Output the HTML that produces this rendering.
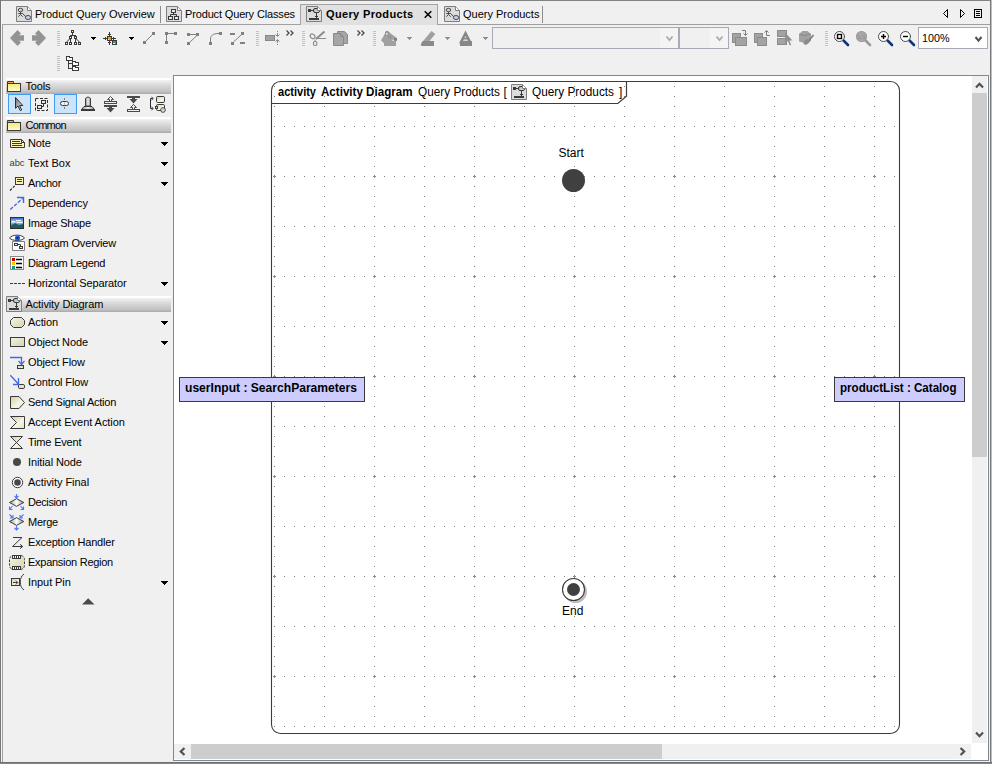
<!DOCTYPE html>
<html lang="en">
<head>
<meta charset="utf-8">
<title>Query Products - Activity Diagram</title>
<style>
html,body{margin:0;padding:0;}
body{width:992px;height:764px;overflow:hidden;background:#f0f0f0;position:relative;
  font-family:"Liberation Sans",sans-serif;font-size:11px;color:#000;}
.abs{position:absolute;}
#win{position:absolute;left:0;top:0;width:992px;height:764px;overflow:hidden;}
/* window edges */
#edgeT{left:0;top:0;width:992px;height:1px;background:#828282;}
#edgeL{left:0;top:0;width:1px;height:764px;background:#767676;}
#edgeL2{left:1px;top:1px;width:1px;height:762px;background:#f6f6f6;}
#edgeR{left:990px;top:0;width:1px;height:764px;background:#7a7a7a;}
#edgeR2{left:991px;top:0;width:1px;height:764px;background:#bdbdbd;}
#edgeB{left:0;top:762px;width:992px;height:1px;background:#707070;}
#edgeB2{left:0;top:763px;width:992px;height:1px;background:#858585;}
/* tabbed pane content border */
#pane{left:2px;top:24px;width:1000px;height:760px;border:1px solid #a0a0a0;box-sizing:border-box;}
/* tabs */
.tab{position:absolute;top:5px;height:19px;line-height:18px;white-space:nowrap;font-size:11px;}
.tabsep{position:absolute;top:6px;width:1px;height:17px;background:#8c8c8c;}
#tabsel{left:300px;top:4px;width:138px;height:21px;background:#e1e1e1;border:1px solid #a3a3a3;border-bottom:none;box-sizing:border-box;}
/* palette */
.phead{position:absolute;left:6px;width:165px;height:16px;background:linear-gradient(#ffffff 0%,#ffffff 12%,#f1f1f1 14%,#dddddd 40%,#cdcdcd 65%,#c2c2c2 85%,#a9a9a9 100%);}
.phead span{position:absolute;left:19.5px;top:0;line-height:17px;font-size:11px;}
.pitem{position:absolute;left:28px;height:20px;line-height:20px;font-size:11px;white-space:nowrap;}
.parr{position:absolute;left:160px;width:0;height:0;border-left:4px solid transparent;border-right:4px solid transparent;border-top:4px solid #000;}
.ico{position:absolute;overflow:visible;}
/* canvas */
#canvas{left:173px;top:75px;width:816px;height:686px;background:#fff;border:1px solid #7f8795;box-sizing:border-box;overflow:hidden;}
.dtext{position:absolute;font-size:12px;white-space:nowrap;color:#000;}
.pin{position:absolute;background:#ccccff;border:1px solid #3f3f3f;box-sizing:border-box;font-weight:bold;font-size:12px;line-height:22px;white-space:nowrap;}
</style>
</head>
<body>
<div id="win">

<!-- ===== tab strip ===== -->
<div id="pane" class="abs"></div>
<div id="tabsel" class="abs"></div>
<div class="tab" style="left:35px;">Product Query Overview</div>
<div class="tabsep" style="left:160px;"></div>
<div class="tab" style="left:185px;letter-spacing:-0.15px;">Product Query Classes</div>
<div class="tab" style="left:326px;font-weight:bold;letter-spacing:0.35px;">Query Products</div>
<div class="tab" style="left:463px;">Query Products</div>
<div class="tabsep" style="left:542px;"></div>

<!-- ===== toolbars ===== -->
<!--TB--><svg class="abs" style="left:0;top:0;pointer-events:none;" width="992" height="76" viewBox="0 0 992 76">
<defs>
  <g id="grip" shape-rendering="crispEdges" fill="#c2c2c2"><rect x="0" y="0" width="3" height="1"/><rect x="0" y="2" width="3" height="1"/><rect x="0" y="4" width="3" height="1"/><rect x="0" y="6" width="3" height="1"/><rect x="0" y="8" width="3" height="1"/><rect x="0" y="10" width="3" height="1"/><rect x="0" y="12" width="3" height="1"/><rect x="0" y="14" width="3" height="1"/></g>
  <g id="dd5" shape-rendering="crispEdges"><rect x="0" y="0" width="5" height="1"/><rect x="1" y="1" width="3" height="1"/><rect x="2" y="2" width="1" height="1"/></g>
  <g id="dd7" shape-rendering="crispEdges"><rect x="0" y="0" width="7" height="1"/><rect x="1" y="1" width="5" height="1"/><rect x="2" y="2" width="3" height="1"/><rect x="3" y="3" width="1" height="1"/></g>
  <linearGradient id="gblue" x1="0" y1="0" x2="1" y2="1"><stop offset="0" stop-color="#8ea4cc"/><stop offset="1" stop-color="#eef3fb"/></linearGradient>
  <!-- document page 16x16 -->
  <g id="fold"><path d="M11.500 0.500V4.500H15.500Z" fill="#fff"/><path d="M11.500 0.500V4.500H15.500" fill="none" stroke="#7e7e7e"/><path d="M11.800 0.800L15.200 4.200" fill="none" stroke="#9a9a9a" stroke-width="0.700"/></g>
  <g id="page"><path d="M0.500 0.500H11.500L15.500 4.500V15.500H0.500Z" fill="#dcdcdc" stroke="#7e7e7e"/><use href="#fold"/></g>
  <!-- use case diagram icon -->
  <g id="icoUC"><use href="#page"/>
    <ellipse cx="4.500" cy="4" rx="2.300" ry="1.700" fill="#c5d3ec" stroke="#3c3c3c" stroke-width="0.900"/>
    <path d="M4.500 6V8.500M2.300 7.500H6.700M4.500 8.500L2.300 10.700M4.500 8.500L6.700 10.700M6.500 7.500L10 10.800" fill="none" stroke="#3c3c3c" stroke-width="0.900"/>
    <ellipse cx="12" cy="11.500" rx="2.700" ry="2" fill="#c5d3ec" stroke="#3c3c3c" stroke-width="0.900"/></g>
  <!-- class diagram icon -->
  <g id="icoCL"><use href="#page"/>
    <g fill="#dfe8f8" stroke="#3a3a3a"><rect x="5.500" y="3.500" width="4" height="3"/><rect x="2.500" y="10.500" width="4" height="3"/><rect x="8.500" y="10.500" width="4" height="3"/></g>
    <path d="M7.500 7V8.500M4.500 10V8.500H10.500V10" fill="none" stroke="#3a3a3a"/></g>
  <!-- activity diagram icon -->
  <g id="icoAC"><use href="#page"/>
    <rect x="2" y="3" width="3" height="3" fill="#3a3a3a"/>
    <path d="M5 4.500H7.500" stroke="#3a3a3a" fill="none"/>
    <rect x="7.500" y="2.500" width="6" height="4" rx="1.500" fill="url(#gblue)" stroke="#3a3a3a"/>
    <path d="M10.500 7V12M9 10.500H12" stroke="#3a3a3a" fill="none"/>
    <rect x="3" y="12" width="10" height="2" fill="#3a3a3a"/>
    <use href="#fold"/></g>
</defs>

<!-- tab icons -->
<use href="#icoUC" x="16" y="6"/>
<use href="#icoCL" x="166" y="6"/>
<use href="#icoAC" x="306" y="6"/>
<use href="#icoUC" x="444" y="6"/>
<!-- tab close X -->
<path d="M424.700 11.300L431.300 17.700M431.300 11.300L424.700 17.700" stroke="#000" stroke-width="1.500" fill="none"/>
<!-- tab scroll buttons -->
<path d="M947.500 9.500V17.500L943.500 13.500Z" fill="none" stroke="#000" stroke-width="1"/>
<path d="M960.500 9.500V17.500L964.500 13.500Z" fill="none" stroke="#000" stroke-width="1"/>
<g shape-rendering="crispEdges"><rect x="974.500" y="9.500" width="7" height="8" fill="none" stroke="#000"/><rect x="976" y="11" width="4" height="1"/><rect x="976" y="13" width="4" height="1"/><rect x="976" y="15" width="4" height="1"/></g>

<!-- grips -->
<use href="#grip" x="57" y="31"/><use href="#grip" x="256" y="31"/><use href="#grip" x="302" y="31"/><use href="#grip" x="373" y="31"/><use href="#grip" x="825" y="31"/><use href="#grip" x="57" y="56"/>

<!-- back / forward -->
<path d="M10 38L17.500 30L21 33.400L19 35.200H24V40.800H19L21 42.600L17.500 46Z" fill="#939393"/>
<path d="M46 38L38.500 30L35 33.400L37 35.200H32V40.800H37L35 42.600L38.500 46Z" fill="#939393"/>

<!-- tree layout icon -->
<g shape-rendering="crispEdges" fill="none" stroke="#3a3a3a">
  <rect x="71.500" y="30.500" width="2" height="2"/><rect x="69.500" y="36.500" width="2" height="2"/><rect x="74.500" y="36.500" width="2" height="2"/>
  <rect x="65.500" y="42.500" width="2" height="2"/><rect x="69.500" y="42.500" width="2" height="2"/><rect x="74.500" y="42.500" width="2" height="2"/><rect x="78.500" y="42.500" width="2" height="2"/>
  <path d="M72.500 33V35.500M70.500 36V35.500H75.500V36M70.500 39V42M75.500 39V42"/>
</g>
<path d="M69.500 39L66.500 42.200M76.500 39L79.500 42.200" stroke="#3a3a3a" fill="none"/>
<use href="#dd5" x="91" y="37" fill="#000"/>

<!-- layout selected icon -->
<g shape-rendering="crispEdges">
  <path d="M109.500 32V36M108 34.500H111M103 38.500H107M105.500 37V40M112 38.500H116M113.500 37V40M109.500 41V45M108 42.500H111" stroke="#3a3a3a" fill="none"/>
  <rect x="107.500" y="36.500" width="4" height="4" fill="#e8962e" stroke="#3a3a3a"/>
  <rect x="108" y="39" width="1" height="1" fill="#fde9c4"/>
  <rect x="112.500" y="40.500" width="4" height="4" fill="#35a352" stroke="#3a3a3a"/>
  <rect x="113" y="43" width="2" height="1" fill="#eaf7ee"/>
</g>
<use href="#dd5" x="129" y="37" fill="#000"/>

<!-- path style icons -->
<g fill="#808080" stroke="#808080">
  <g stroke="none"><rect x="143" y="41" width="3" height="3"/><rect x="152" y="32" width="3" height="3"/>
  <rect x="165" y="32" width="3" height="3"/><rect x="174" y="32" width="3" height="3"/><rect x="165" y="41" width="3" height="3"/>
  <rect x="187" y="33" width="3" height="3"/><rect x="196" y="33" width="3" height="3"/><rect x="187" y="42" width="3" height="3"/>
  <rect x="219" y="32" width="3" height="3"/><rect x="209" y="42" width="3" height="3"/>
  <rect x="241" y="32" width="3" height="3"/><rect x="231" y="42" width="3" height="3"/>
  <rect x="230" y="33" width="5" height="2"/><rect x="240" y="42" width="5" height="2"/></g>
  <path d="M145.500 41.500L152.500 34.500M168 33.500H174M166.500 35V41M190 34.500H196M197 35.500L189.500 42.500M210.500 42V39C210.500 35.500 213 33.500 219 33.500M233.500 42L241.500 34.500" fill="none" stroke-width="1"/>
</g>

<!-- make same size icon -->
<rect x="265.500" y="35.500" width="9" height="5" fill="#a2a2a2" stroke="#868686"/>
<g stroke="#868686" fill="none"><path d="M277.500 33V36M275.500 34.500L277.500 36.500L279.500 34.500M277.500 43V40M275.500 41.500L277.500 39.500L279.500 41.500"/></g>
<rect x="277" y="31" width="1" height="1" fill="#868686"/><rect x="277" y="44" width="1" height="1" fill="#868686"/>
<path d="M286.500 30.500L289 33L286.500 35.500M290.500 30.500L293 33L290.500 35.500" fill="none" stroke="#484848" stroke-width="1.300"/>

<!-- cut -->
<g fill="none" stroke="#8c8c8c">
  <ellipse cx="312.600" cy="36.300" rx="2.600" ry="2" transform="rotate(35 312.600 36.300)" stroke-width="1.200"/>
  <rect x="313.500" y="41.500" width="3.300" height="4" rx="1.200" stroke-width="1.200"/>
  <path d="M316 39L324.500 31.500" stroke-width="2"/>
  <path d="M315 41.500V39.500M316.500 38.500H326" stroke-width="1"/>
</g>
<!-- copy -->
<path d="M337.500 31.500H344.500L347.500 34.500V43.500H337.500Z" fill="#a6a6a6" stroke="#8a8a8a"/>
<path d="M333.500 33.500H340.500L343.500 36.500V45.500H333.500Z" fill="#a6a6a6" stroke="#8a8a8a"/>
<path d="M340.500 33.500V36.500H343.500" fill="none" stroke="#8a8a8a"/>
<path d="M357.500 30.500L360 33L357.500 35.500M361.500 30.500L364 33L361.500 35.500" fill="none" stroke="#484848" stroke-width="1.300"/>

<!-- fill color (bucket) -->
<path d="M381 40.200L386.300 31.600L388 31.300L397 38.300V41H396V46H384V43.200Z" fill="#a0a0a0"/>
<path d="M385.500 36V33.200C385.500 30.800 388.700 30.800 388.700 33.400" fill="none" stroke="#8c8c8c" stroke-width="1.100"/><circle cx="386.700" cy="33.800" r="0.900" fill="#f0f0f0"/><path d="M388 35.500L391 38.500" stroke="#8e8e8e" stroke-width="1.400" fill="none"/><rect x="392.500" y="39.700" width="1.300" height="1.300" fill="#efefef"/>
<rect x="394" y="38" width="3" height="2.500" fill="#808080"/>
<use href="#dd5" x="407" y="37" fill="#8e8e8e"/>
<!-- line color (pen) -->
<path d="M423.200 41L431.500 31L435.300 34L429.500 41Z" fill="#a0a0a0"/>
<path d="M422.500 41H434V46H421.500L420.800 44.500Z" fill="#8a8a8a"/>
<use href="#dd5" x="445" y="37" fill="#8e8e8e"/>
<!-- text color (A) -->
<path d="M465.500 33.200L461 42H470Z" fill="none" stroke="#868686" stroke-width="2.500" stroke-linejoin="miter"/>
<path d="M462.500 38.600H468.500" stroke="#868686" stroke-width="1.800"/>
<rect x="460" y="41" width="12" height="5" fill="#868686"/>
<use href="#dd5" x="483" y="37" fill="#8e8e8e"/>

<!-- combos -->
<g shape-rendering="crispEdges" fill="none" stroke="#a8abb6">
  <rect x="492.500" y="27.500" width="186" height="21" fill="#f0f0f0"/>
  <rect x="679.500" y="27.500" width="49" height="21" fill="#f0f0f0"/>
  <rect x="918.500" y="27.500" width="69" height="21" fill="#fff"/>
</g>
<rect x="660" y="28" width="18" height="20" fill="#f4f4f4"/><rect x="710" y="28" width="18" height="20" fill="#f4f4f4"/>
<path d="M666.500 36.500L669.500 40L672.500 36.500" fill="none" stroke="#aaaaaa" stroke-width="1.800"/>
<path d="M716.500 36.500L719.500 40L722.500 36.500" fill="none" stroke="#aaaaaa" stroke-width="1.800"/>
<path d="M975.500 37L978.500 40.700L981.500 37" fill="none" stroke="#505050" stroke-width="2"/>

<!-- order icons -->
<g fill="#a3a3a3" stroke="#8b8b8b">
  <rect x="732.500" y="33.500" width="8" height="9"/><rect x="735.500" y="37.500" width="11" height="8"/>
  <rect x="754.500" y="33.500" width="8" height="9"/><rect x="757.500" y="37.500" width="9" height="8"/>
  <rect x="777.500" y="30.500" width="9" height="6"/><rect x="777.500" y="38.500" width="9" height="6"/>
</g>
<path d="M742 30.500H745.500V35M743.500 33.500L745.500 35.500L747.500 33.500" fill="none" stroke="#7e7e7e"/>
<path d="M770 35.500H766.500V31M764.500 32.500L766.500 30.500L768.500 32.500" fill="none" stroke="#7e7e7e"/>
<path d="M785 32.500V43.500L787.800 41L789.800 45.500L791.200 44.800L789.300 40.500H792.500Z" fill="#909090"/>
<!-- style brush icon -->
<path d="M799 34L802.500 31H807.500L811 34V41L806 43.500L799 41.500Z" fill="#a0a0a0"/>
<path d="M799.500 34.200L805 35.500L810.500 34" fill="none" stroke="#8a8a8a"/>
<path d="M813.500 35L808.500 41" stroke="#7e7e7e" stroke-width="1.800"/>
<ellipse cx="806.500" cy="42" rx="3.300" ry="2.300" transform="rotate(-40 806.500 42)" fill="#8c8c8c"/>

<!-- zoom icons -->
<g stroke-linecap="round">
  <path d="M843.500 40.500L848 45" stroke="#0f347f" stroke-width="2.600"/>
  <circle cx="839.500" cy="36.500" r="5" fill="#fff" stroke="#4a4a4a" stroke-width="1"/>
  <rect x="837.500" y="34.500" width="4" height="4" fill="#fff" stroke="#000" stroke-width="1.400"/>
  <path d="M865.500 40.500L870 45" stroke="#9a9a9a" stroke-width="2.600"/>
  <circle cx="861.500" cy="36.500" r="5" fill="#a8a8a8" stroke="#999999" stroke-width="1.100"/>
  <text x="857.800" y="38.800" font-family="Liberation Sans, sans-serif" font-size="6" font-weight="bold" fill="#949494" textLength="7.500" lengthAdjust="spacingAndGlyphs">1:1</text>
  <path d="M887.500 40.500L892 45" stroke="#0f347f" stroke-width="2.600"/>
  <circle cx="883.500" cy="36.500" r="5" fill="#fff" stroke="#4a4a4a" stroke-width="1"/>
  <path d="M881 36.500H886M883.500 34V39" stroke="#000" stroke-width="1.400" stroke-linecap="butt"/>
  <path d="M909.500 40.500L914 45" stroke="#0f347f" stroke-width="2.600"/>
  <circle cx="905.500" cy="36.500" r="5" fill="#fff" stroke="#4a4a4a" stroke-width="1"/>
  <path d="M903 36.500H908" stroke="#000" stroke-width="1.400" stroke-linecap="butt"/>
</g>
<text x="922" y="42" font-family="Liberation Sans, sans-serif" font-size="11" fill="#000" textLength="27.500" lengthAdjust="spacingAndGlyphs">100%</text>

<!-- containment tree icon (row 2) -->
<g fill="#fff" stroke="#3a3a3a" shape-rendering="crispEdges">
  <path d="M68.500 61V68.500H72M68.500 63.500H72" fill="none"/>
  <path d="M66.500 56.500H69.500V57.500H72.500V60.500H66.500Z"/>
  <path d="M72.500 61.500H75.500V62.500H78.500V65.500H72.500Z"/>
  <path d="M72.500 66.500H75.500V67.500H78.500V70.500H72.500Z"/>
</g>
</svg>
<!--/TB-->

<!-- ===== palette ===== -->
<div id="palette">
<div class="phead" style="top:78px;"><span style="letter-spacing:-0.16px">Tools</span></div>
<div class="phead" style="top:117px;"><span style="letter-spacing:-0.7px">Common</span></div>
<div class="phead" style="top:296px;"><span style="letter-spacing:-0.11px">Activity Diagram</span></div>

<div class="pitem" style="top:133px;letter-spacing:-0.16px">Note</div>
<div class="pitem" style="top:153px;letter-spacing:0.05px">Text Box</div>
<div class="pitem" style="top:173px;letter-spacing:-0.31px">Anchor</div>
<div class="pitem" style="top:193px;letter-spacing:-0.21px">Dependency</div>
<div class="pitem" style="top:213px;letter-spacing:-0.24px">Image Shape</div>
<div class="pitem" style="top:233px;letter-spacing:-0.15px">Diagram Overview</div>
<div class="pitem" style="top:253px;letter-spacing:-0.3px">Diagram Legend</div>
<div class="pitem" style="top:273px;letter-spacing:-0.12px">Horizontal Separator</div>

<div class="pitem" style="top:312px;letter-spacing:-0.1px">Action</div>
<div class="pitem" style="top:332px;letter-spacing:-0.11px">Object Node</div>
<div class="pitem" style="top:352px;letter-spacing:-0.11px">Object Flow</div>
<div class="pitem" style="top:372px;letter-spacing:-0.15px">Control Flow</div>
<div class="pitem" style="top:392px;letter-spacing:-0.24px">Send Signal Action</div>
<div class="pitem" style="top:412px;letter-spacing:-0.05px">Accept Event Action</div>
<div class="pitem" style="top:432px;letter-spacing:-0.19px">Time Event</div>
<div class="pitem" style="top:452px;letter-spacing:-0.1px">Initial Node</div>
<div class="pitem" style="top:472px;letter-spacing:-0.05px">Activity Final</div>
<div class="pitem" style="top:492px;letter-spacing:-0.4px">Decision</div>
<div class="pitem" style="top:512px;letter-spacing:-0.24px">Merge</div>
<div class="pitem" style="top:532px;letter-spacing:-0.19px">Exception Handler</div>
<div class="pitem" style="top:552px;letter-spacing:-0.27px">Expansion Region</div>
<div class="pitem" style="top:572px;letter-spacing:-0.07px">Input Pin</div>
<!--PAL--><svg class="abs" style="left:0;top:76px;pointer-events:none;" width="173" height="540" viewBox="0 76 173 540">
<defs>
  <linearGradient id="gfold" x1="0" y1="0" x2="0" y2="1"><stop offset="0" stop-color="#f2ea6a"/><stop offset="1" stop-color="#fffce0"/></linearGradient>
  <linearGradient id="gcream" x1="0" y1="0" x2="1" y2="1"><stop offset="0" stop-color="#f4f4e2"/><stop offset="1" stop-color="#d4d4b2"/></linearGradient>
  <linearGradient id="gcream2" x1="0" y1="0" x2="1" y2="1"><stop offset="0" stop-color="#d2cf9c"/><stop offset="0.6" stop-color="#f6f6e6"/><stop offset="1" stop-color="#e0e0c4"/></linearGradient>
  <linearGradient id="gdia" x1="0" y1="0" x2="1" y2="0"><stop offset="0" stop-color="#9a9a9a"/><stop offset="0.5" stop-color="#ffffff"/><stop offset="1" stop-color="#9a9a9a"/></linearGradient>
  <linearGradient id="gcur" x1="0" y1="0" x2="1" y2="1"><stop offset="0" stop-color="#6a6a6a"/><stop offset="1" stop-color="#f4f4f4"/></linearGradient>
  <linearGradient id="gstamp" x1="0" y1="0" x2="1" y2="0"><stop offset="0" stop-color="#8a8a8a"/><stop offset="0.5" stop-color="#f0f0f0"/><stop offset="1" stop-color="#8a8a8a"/></linearGradient>
  <linearGradient id="gsky" x1="0" y1="0" x2="0" y2="1"><stop offset="0" stop-color="#2b63c8"/><stop offset="0.45" stop-color="#b8d6f0"/><stop offset="0.6" stop-color="#5aa0a0"/><stop offset="1" stop-color="#1d5a62"/></linearGradient>
  <g id="folder"><path d="M0.500 2.500V0.500H6.500V2.500" fill="#f3c277" stroke="#3a3a3a"/><rect x="1" y="1" width="5" height="1" fill="#f0a850"/><rect x="0.500" y="2.500" width="13" height="8" fill="url(#gfold)" stroke="#3a3a3a"/></g>
  <g id="pdd" shape-rendering="crispEdges" fill="#000"><rect x="0" y="0" width="7" height="1"/><rect x="1" y="1" width="5" height="1"/><rect x="2" y="2" width="3" height="1"/><rect x="3" y="3" width="1" height="1"/></g>
</defs>

<!-- folders in headers -->
<use href="#folder" x="7" y="81"/>
<use href="#folder" x="7" y="120"/>
<use href="#icoAC" x="6" y="296"/>

<!-- dropdown arrows -->
<use href="#pdd" x="161" y="142"/><use href="#pdd" x="161" y="162"/><use href="#pdd" x="161" y="182"/><use href="#pdd" x="161" y="282"/>
<use href="#pdd" x="161" y="321"/><use href="#pdd" x="161" y="341"/><use href="#pdd" x="161" y="581"/>

<!-- tool buttons -->
<g shape-rendering="crispEdges"><rect x="8.500" y="94.500" width="22" height="19" fill="#cce4fb" stroke="#3d9bf5"/><rect x="54.500" y="94.500" width="22" height="19" fill="#cce4fb" stroke="#3d9bf5"/></g>
<!-- select arrow -->
<path d="M15.500 97.500V108.300L18 106L20.300 110.700L21.700 110L19.500 105.500H22.800Z" fill="url(#gcur)" stroke="#2e2e2e" stroke-width="1" stroke-linejoin="round"/>
<!-- marquee -->
<rect x="35.500" y="98.500" width="12" height="12" fill="none" stroke="#2e2e2e" stroke-width="1" stroke-dasharray="3 1.500"/>
<rect x="41.500" y="100.500" width="4" height="3" fill="#e8e8e8" stroke="#2e2e2e"/><rect x="37.500" y="105.500" width="4" height="3" fill="#e8e8e8" stroke="#2e2e2e"/>
<path d="M43.500 104V106.500H42" fill="none" stroke="#2e2e2e"/>
<!-- sticky -->
<rect x="60.500" y="101.500" width="8" height="4" rx="2" fill="#f2f2f2" stroke="#3a3a3a"/>
<path d="M64.500 98V100M64.500 107V109" stroke="#8a7a6a" fill="none"/>
<path d="M64.500 102.500V104.500" stroke="#b0b0b0" fill="none"/>
<!-- stamp -->
<path d="M85.500 99C85.500 96.500 90.500 96.500 90.500 99V106H85.500Z" fill="url(#gstamp)" stroke="#3a3a3a"/>
<path d="M81.500 109.500L84 106.500H92L94.500 109.500Z" fill="url(#gstamp)" stroke="#3a3a3a" stroke-linejoin="round"/>
<rect x="81" y="109" width="14" height="2" fill="#3a3a3a"/>
<!-- split icons -->
<g stroke="#4a4a4a" fill="none">
  <path d="M110.500 96.500L107.500 99.500H109.500V101.500H111.500V99.500H113.500Z" fill="#f0f0f0"/>
  <rect x="104.500" y="101.500" width="12" height="2" fill="#f0f0f0"/>
</g>
<rect x="104" y="105" width="13" height="2" fill="#4a4a4a"/><path d="M106.500 108H114.500L110.500 112.500Z" fill="#4a4a4a"/><rect x="109" y="106" width="3" height="3" fill="#4a4a4a"/>
<rect x="127" y="96" width="13" height="2" fill="#4a4a4a"/><path d="M129.500 99H137.500L133.500 103.500Z" fill="#4a4a4a"/><rect x="132" y="97" width="3" height="3" fill="#4a4a4a"/>
<g stroke="#4a4a4a" fill="#f0f0f0"><path d="M133.500 104.500L130.500 107.500H132.500V109.500H134.500V107.500H136.500Z"/><rect x="127.500" y="109.500" width="12" height="2"/></g>
<!-- last tool: transform -->
<path d="M152.500 98.500H150.500V108.500H152.500M151.500 97L153.300 98.500L151.500 100M151.500 107L153.300 108.500L151.500 110" fill="none" stroke="#2e2e2e"/>
<rect x="156.500" y="96.500" width="8" height="6" rx="1.200" fill="url(#gcream2)" stroke="#3a3a3a"/>
<rect x="156.500" y="104.500" width="8" height="6" rx="1.200" fill="url(#gcream2)" stroke="#3a3a3a"/>
<rect x="155.500" y="106.500" width="2" height="2" fill="#d8d4a0" stroke="#3a3a3a"/>
<circle cx="163" cy="110" r="2.300" fill="#fff" stroke="#3a3a3a"/><rect x="162.500" y="109.500" width="1" height="1" fill="#3a3a3a"/>

<!-- Note -->
<path d="M10.500 139.500H21.500L24.500 142.500V147.500H10.500Z" fill="#fbf3b4" stroke="#3a3a3a"/>
<path d="M21.500 139.500V142.500H24.500M12 141.500H20M12 143.500H22M12 145.500H22" fill="none" stroke="#3a3a3a"/>
<!-- abc -->
<text x="9.500" y="166" font-family="Liberation Sans, sans-serif" font-size="9.500" fill="#3a3a3a" textLength="15" lengthAdjust="spacingAndGlyphs">abc</text>
<!-- Anchor -->
<rect x="15.500" y="177.500" width="8" height="7" fill="#fbf3b4" stroke="#3a3a3a"/>
<path d="M17 179.500H22M17 181.500H22" stroke="#3a3a3a" fill="none"/>
<path d="M14.700 185.800L9.800 190.700" stroke="#2a2a2a" stroke-width="1.200" stroke-dasharray="2.600 1.400" fill="none"/>
<!-- Dependency -->
<path d="M10.300 209.500L22.500 198.500" stroke="#4169e1" stroke-width="1.400" stroke-dasharray="3.600 1.500" fill="none"/>
<path d="M17 197.500H23.500V203" stroke="#4169e1" stroke-width="1.400" fill="none"/>
<!-- Image shape -->
<rect x="10.500" y="217.500" width="13" height="11" fill="url(#gsky)" stroke="#2e2e2e"/>
<path d="M12 221.500H15M16 220.500H21M17 222.500H22" stroke="#f4f8fc" fill="none"/>
<path d="M11 226L15 223L19 225.500L23 224V228H11Z" fill="#1d5a62"/>
<!-- Diagram overview -->
<path d="M12.500 241.500H24.500V250.500H12.500Z" fill="#fff" stroke="#808080"/>
<rect x="14.500" y="243.500" width="3" height="2" fill="#e8e8f4" stroke="#3a3a3a"/><rect x="19.500" y="246.500" width="3" height="2" fill="#e8e8f4" stroke="#3a3a3a"/>
<path d="M18 244.500H20.500V246" fill="none" stroke="#3a3a3a"/>
<path d="M9.500 238C12.500 234.200 21.500 234.200 24.500 238C21.500 241.300 12.500 241.300 9.500 238Z" fill="#fff" stroke="#3a3a3a"/>
<circle cx="17.500" cy="238" r="2.600" fill="#1a5fe0"/><circle cx="17.500" cy="238" r="1" fill="#10204a"/>
<!-- Diagram legend -->
<rect x="10.500" y="256.500" width="13" height="13" fill="#fff" stroke="#8a8a8a"/>
<rect x="12" y="258" width="3" height="3" fill="#c00000"/><rect x="12" y="262" width="3" height="3" fill="#ffc000"/><rect x="12" y="266" width="3" height="3" fill="#0e9a8a"/>
<path d="M16 259.500H22M16 263.500H22M16 267.500H22" stroke="#000" stroke-width="1.300"/>
<!-- Horizontal separator -->
<path d="M10 283.500H25" stroke="#3a3a3a" stroke-dasharray="3 1" fill="none"/>

<!-- Action -->
<path d="M13.500 317.500H21.500L24.500 320.500V324.500L21.500 327.500H13.500L10.500 324.500V320.500Z" fill="url(#gcream)" stroke="#3a3a3a"/>
<!-- Object node -->
<rect x="10.500" y="337.500" width="14" height="9" fill="url(#gcream)" stroke="#3a3a3a"/>
<!-- Object flow -->
<path d="M10 357.500H21.500V364" stroke="#4169e1" stroke-width="1.300" fill="none"/>
<path d="M18.500 361L21.500 364.500L24.500 361" stroke="#4169e1" stroke-width="1.200" fill="none"/>
<rect x="17.500" y="365.500" width="6" height="3" fill="#e8e6c0" stroke="#3a3a3a"/>
<!-- Control flow -->
<path d="M10.300 375.300L18 383.500M18.500 378V384.500H13" stroke="#4169e1" stroke-width="1.300" fill="none"/>
<rect x="18.500" y="384.500" width="6" height="4" rx="1.300" fill="#e8e6c0" stroke="#3a3a3a"/>
<!-- Send signal -->
<path d="M10.500 396.500H19L24.500 402.500L19 408.500H10.500Z" fill="url(#gcream2)" stroke="#3a3a3a"/>
<!-- Accept event -->
<path d="M10.500 416.500H24.500V428.500H10.500L16.500 422.500Z" fill="url(#gcream2)" stroke="#3a3a3a"/>
<!-- Time event -->
<path d="M10.500 436.500H22.500L10.500 448.500H22.500Z" fill="url(#gcream2)" stroke="#3a3a3a" stroke-linejoin="miter"/>
<!-- Initial node -->
<circle cx="17" cy="462" r="4" fill="#484848"/>
<!-- Activity final -->
<circle cx="17.500" cy="482.500" r="5.200" fill="#fff" stroke="#3a3a3a" stroke-width="1"/><circle cx="17.500" cy="482.500" r="3.300" fill="#484848"/>
<!-- Decision -->
<path d="M9.500 502.500L16.500 498.700L23.800 502.500L16.500 506.300Z" fill="url(#gdia)" stroke="#3a3a3a"/>
<g stroke="#4f78ea" fill="none" stroke-width="1.100"><path d="M16.500 494V498M14.500 496L16.500 498L18.500 496M12.500 506L9.500 509.300M9.500 506.500V509.500H12.500M20.500 506L23.500 509.300M23.500 506.500V509.500H20.500"/></g>
<!-- Merge -->
<g stroke="#4f78ea" fill="none" stroke-width="1.100"><path d="M9.500 514.500L13 518M13 515V518H10M23.500 514.500L20 518M20 515V518H23M16.500 526V530M14.500 528L16.500 530L18.500 528"/></g>
<path d="M9.500 521.500L16.500 517.700L23.800 521.500L16.500 525.300Z" fill="url(#gdia)" stroke="#3a3a3a"/>
<!-- Exception handler -->
<path d="M13 537.500H22L12.500 546.500H22.500M20 544.300L22.700 546.500L20 548.700" fill="none" stroke="#3a3a3a"/>
<!-- Expansion region -->
<rect x="9.500" y="555.500" width="15" height="14" rx="4" fill="url(#gcream)" stroke="#3a3a3a" stroke-dasharray="2.500 1.300"/>
<g fill="#f4f4e2" stroke="#3a3a3a"><rect x="12.500" y="555.500" width="8" height="3"/><rect x="12.500" y="566.500" width="8" height="3"/></g>
<path d="M14.500 556V558M16.500 556V558M18.500 556V558M14.500 567V569M16.500 567V569M18.500 567V569" stroke="#3a3a3a" fill="none"/>
<!-- Input pin -->
<rect x="11.500" y="578.500" width="8" height="7" fill="url(#gcream2)" stroke="#3a3a3a"/>
<path d="M13 582.500H17.500M15.800 580.500L17.800 582.500L15.800 584.500" fill="none" stroke="#3a3a3a"/>
<path d="M24 574C19 577 19 587 24 590" fill="none" stroke="#3a3a3a"/>
<!-- collapse arrow -->
<path d="M82 604.500H94.500L88.200 598.200Z" fill="#4c4c4c"/>
</svg>
<!--/PAL-->
</div>

<!-- ===== diagram canvas ===== -->
<div id="canvas" class="abs">
<svg class="abs" style="left:0;top:0;" width="814" height="684" viewBox="174 76 814 684">
  <defs>
    <pattern id="gv" x="274" y="76" width="50" height="10" patternUnits="userSpaceOnUse"><rect x="0" y="0" width="1" height="1" fill="#7d7d7d"/></pattern>
    <pattern id="gh" x="274" y="76" width="10" height="50" patternUnits="userSpaceOnUse"><rect x="0" y="0" width="1" height="1" fill="#7d7d7d"/></pattern>
    <pattern id="gp" x="273" y="75" width="100" height="100" patternUnits="userSpaceOnUse"><path d="M1 0.5h1M0 1.5h3M1 2.5h1" stroke="#8a8a8a" stroke-width="1" fill="none"/></pattern>
    <clipPath id="fclip"><rect x="272" y="82" width="627" height="651" rx="9" ry="9"/></clipPath>
  </defs>
  <!-- frame fill + grid -->
  <g clip-path="url(#fclip)">
    <rect x="272" y="82" width="627" height="651" fill="url(#gv)"/>
    <rect x="272" y="82" width="627" height="651" fill="url(#gh)"/>
    <rect x="272" y="82" width="627" height="651" fill="url(#gp)"/>
  </g>
  <!-- header tab -->
  <path d="M272 103.500H617.800L626.500 96.300V82" fill="none" stroke="#3c3c3c" stroke-width="1.2"/>
  <g font-family="Liberation Sans, sans-serif" font-size="12" fill="#000">
    <text x="278" y="96" font-weight="bold" textLength="38" lengthAdjust="spacingAndGlyphs">activity</text>
    <text x="321" y="96" font-weight="bold" textLength="91.500" lengthAdjust="spacingAndGlyphs">Activity Diagram</text>
    <text x="418" y="96" textLength="82" lengthAdjust="spacingAndGlyphs">Query Products</text>
    <text x="503.500" y="95.500">[</text>
    <text x="532" y="96" textLength="82" lengthAdjust="spacingAndGlyphs">Query Products</text>
    <text x="619" y="95.500">]</text>
  </g>
  <use href="#icoAC" x="511" y="84"/>
  <!-- start node -->
  <circle cx="573.500" cy="180.500" r="11.500" fill="#404040"/>
  <text x="558.500" y="157" font-family="Liberation Sans, sans-serif" font-size="12" fill="#000">Start</text>
  <!-- end node -->
  <circle cx="575.500" cy="591.500" r="11.500" fill="#bdbdbd"/>
  <circle cx="573.500" cy="589.500" r="11" fill="#fff" stroke="#3c3c3c" stroke-width="1.100"/>
  <circle cx="573.500" cy="589.500" r="6.500" fill="#404040"/>
  <text x="562" y="615" font-family="Liberation Sans, sans-serif" font-size="12" fill="#000">End</text>
  <!-- frame outline -->
  <rect x="271.5" y="81.500" width="628" height="652" rx="9" ry="9" fill="none" stroke="#3c3c3c" stroke-width="1.1"/>
  <!-- pins -->
  <rect x="179.500" y="377.500" width="185" height="24" fill="#ccccff" stroke="#3a3a3a" stroke-width="1"/>
  <rect x="834.500" y="377.500" width="130" height="24" fill="#ccccff" stroke="#3a3a3a" stroke-width="1"/>
  <g font-family="Liberation Sans, sans-serif" font-size="12" font-weight="bold" fill="#000">
    <text x="185" y="392" textLength="172" lengthAdjust="spacingAndGlyphs">userInput : SearchParameters</text>
    <text x="840" y="392" textLength="116.500" lengthAdjust="spacingAndGlyphs">productList : Catalog</text>
  </g>
</svg>
</div>

<!-- ===== scrollbars ===== -->
<div class="abs" style="left:972px;top:76px;width:15px;height:667px;background:#f0f0f0;"></div>
<div class="abs" style="left:972px;top:93px;width:15px;height:364px;background:#cdcdcd;"></div>
<svg class="abs" style="left:972px;top:76px;" width="15" height="17" viewBox="0 0 15 17"><path d="M4 11.500L7.500 7.800L11 11.500" fill="none" stroke="#505050" stroke-width="2.200"/></svg>
<svg class="abs" style="left:972px;top:726px;" width="15" height="17" viewBox="0 0 15 17"><path d="M4 6.500L7.500 10.200L11 6.500" fill="none" stroke="#505050" stroke-width="2.200"/></svg>
<div class="abs" style="left:174px;top:744px;width:797px;height:15px;background:#f0f0f0;"></div>
<div class="abs" style="left:191px;top:744px;width:471px;height:15px;background:#cdcdcd;"></div>
<svg class="abs" style="left:174px;top:744px;" width="17" height="15" viewBox="0 0 17 15"><path d="M10.500 4L6.800 7.500L10.500 11" fill="none" stroke="#505050" stroke-width="2.200"/></svg>
<svg class="abs" style="left:954px;top:744px;" width="17" height="15" viewBox="0 0 17 15"><path d="M6.500 4L10.200 7.500L6.500 11" fill="none" stroke="#505050" stroke-width="2.200"/></svg>

<div id="edgeT" class="abs"></div><div id="edgeL2" class="abs"></div><div id="edgeL" class="abs"></div>
<div id="edgeR" class="abs"></div><div id="edgeR2" class="abs"></div><div id="edgeB" class="abs"></div><div id="edgeB2" class="abs"></div>
</div>
</body>
</html>
